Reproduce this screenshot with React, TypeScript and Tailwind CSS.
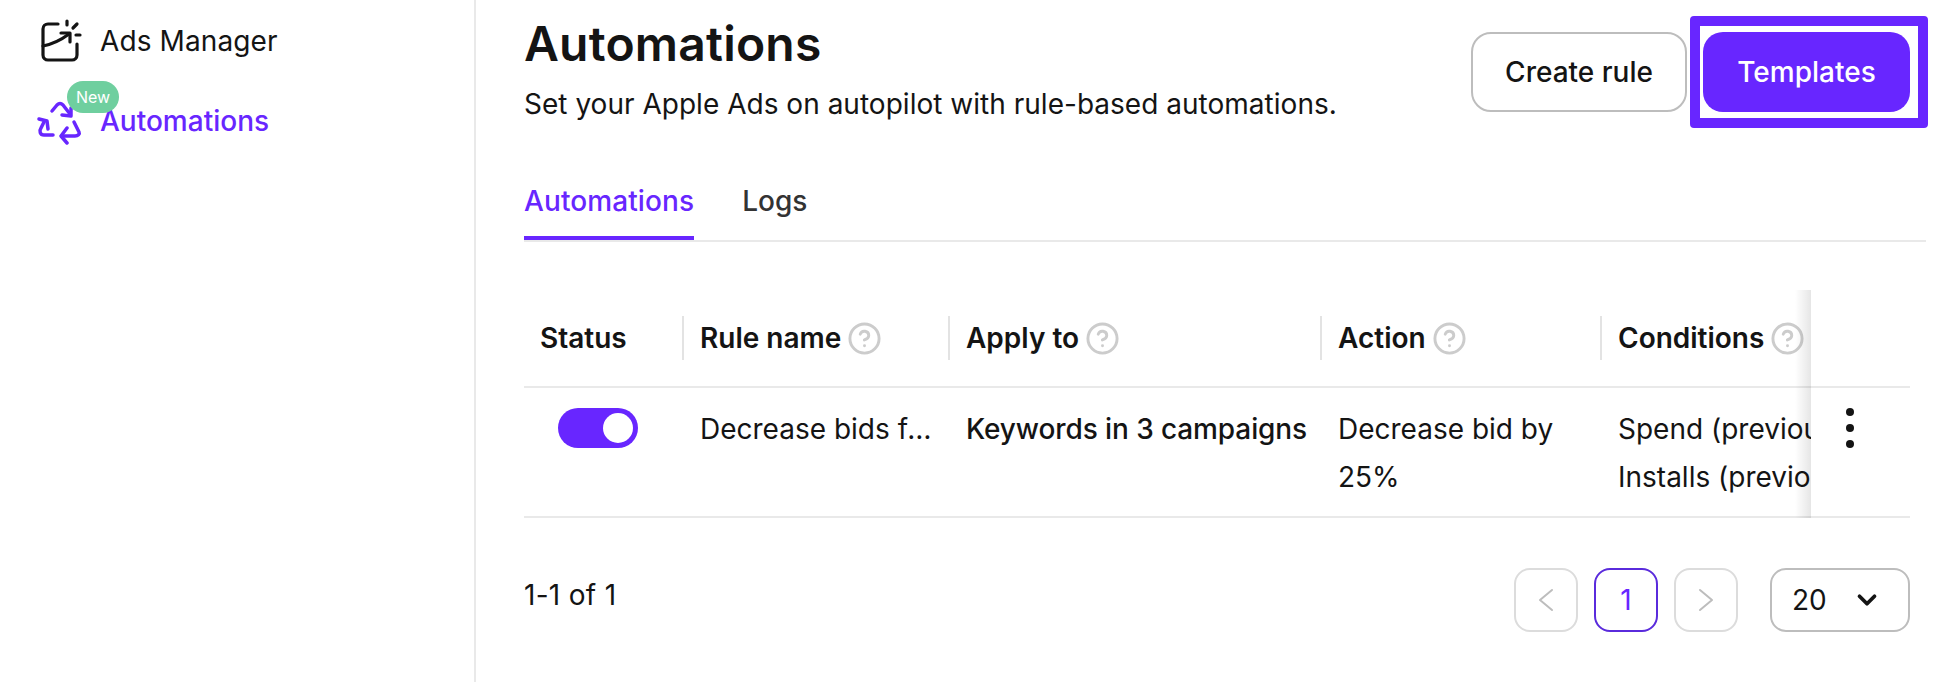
import { ChevronDown, CircleHelp } from 'lucide-react';

const PURPLE = 'text-[#6826ff]';

function AdsIcon() {
    return (
        <svg width="48" height="48" viewBox="0 0 48 48" fill="none" stroke="#141414" strokeWidth="3.2" strokeLinecap="round" strokeLinejoin="round">
            <path d="M22 7H12a5 5 0 0 0-5 5v26a5 5 0 0 0 5 5h24a5 5 0 0 0 5-5V27" />
            <path d="M7 29c10-2 18-6 26-12" />
            <path d="M25 16h9v9" />
            <path d="M31 4v4M37 11l4-4M40 18h4" />
        </svg>
    );
}

function AutomationIcon() {
    return (
        <svg width="48" height="48" viewBox="0 0 48 48" fill="none" stroke="#6826ff" strokeWidth="3.5" strokeLinecap="round" strokeLinejoin="round">
            <path d="M16 14l5-6c2-2 4-2 6 0l7 9" />
            <path d="M26 18l9 1 0-8" />
            <path d="M17 38H8c-4 0-5-4-3-7l3-6" />
            <path d="M3 22l8 2 1 8" />
            <path d="M38 25l5 10c1 2-1 4-4 4H26" />
            <path d="M31 31l-6 8 6 7" />
        </svg>
    );
}

function Chevron({ d }: { d: string }) {
    return (
        <svg width="16" height="24" viewBox="0 0 16 24" fill="none" stroke="#bdbdbd" strokeWidth="2" strokeLinecap="round" strokeLinejoin="round">
            <path d={d} />
        </svg>
    );
}

function HeaderCell({ label, help = true, last = false }: { label: string; help?: boolean; last?: boolean }) {
    return (
        <div className="flex h-[96px] items-center overflow-hidden">
            <div className={`flex h-[44px] w-full items-center gap-[6px] px-4 ${last ? '' : 'border-r-2 border-[#e3e3e3]'}`}>
                <span className="whitespace-nowrap font-semibold text-[#141414]">{label}</span>
                {help && <CircleHelp size={35} strokeWidth={2} className="shrink-0 text-[#cccccc]" />}
            </div>
        </div>
    );
}

export default function App() {
    return (
        <div className="flex h-[682px] w-[1952px] overflow-hidden bg-white text-[28px] leading-[48px] text-[#141414] antialiased [font-family:Inter,sans-serif]">
            {/* Sidebar */}
            <aside className="flex w-[476px] shrink-0 flex-col gap-[32px] border-r-2 border-[#e9e9e9] pl-[36px] pt-[17px]">
                <div className="flex h-[48px] items-center gap-[16px]">
                    <AdsIcon />
                    <span className="tracking-[0.1px] text-[#141414]">Ads Manager</span>
                </div>
                <div className="relative flex h-[48px] items-center gap-[16px]">
                    <AutomationIcon />
                    <span className={`font-medium ${PURPLE}`}>Automations</span>
                    <span className="absolute left-[31px] top-[-16px] rounded-[16px] bg-[#6fcf9f] px-[9px] text-[16px] leading-[32px] text-white">New</span>
                </div>
            </aside>

            {/* Main */}
            <main className="flex min-w-0 flex-1 flex-col pl-[48px] pr-[42px]">
                <div className="flex h-[132px] items-start justify-between">
                    <div>
                        <h1 className="mt-[14px] text-[48px] font-semibold leading-[60px] tracking-[0.2px]">Automations</h1>
                        <p className="mt-[12px] leading-[36px] tracking-[0.02px]">Set your Apple Ads on autopilot with rule-based automations.</p>
                    </div>
                    <div className="mr-[-18px] mt-[16px] flex items-center gap-[3px]">
                        <button className="h-[80px] w-[216px] rounded-[20px] border-2 border-[#bdbdbd] bg-white font-medium">Create rule</button>
                        <div className="rounded-[4px] border-[10px] border-[#6826ff] py-[6px] pl-[3px] pr-[8px]">
                            <button className="block h-[80px] w-[207px] rounded-[20px] bg-[#6826ff] font-medium text-white">Templates</button>
                        </div>
                    </div>
                </div>

                {/* Tabs */}
                <div className="mr-[-16px] flex h-[110px] items-end gap-[48px] border-b-2 border-[#e9e9e9]">
                    <div className={`h-[68px] border-b-4 border-[#6826ff] font-medium leading-[58px] tracking-[0.1px] ${PURPLE}`}>Automations</div>
                    <div className="h-[68px] font-medium leading-[58px] text-[#333333]">Logs</div>
                </div>

                {/* Table */}
                <div className="mt-[48px] flex">
                    <div className="min-w-0 flex-1 overflow-hidden">
                        <div className="grid grid-cols-[160px_266px_372px_280px_210px] border-b-2 border-[#e9e9e9]">
                            <HeaderCell label="Status" help={false} />
                            <HeaderCell label="Rule name" />
                            <HeaderCell label="Apply to" />
                            <HeaderCell label="Action" />
                            <HeaderCell label="Conditions" last />
                        </div>
                        <div className="grid h-[130px] grid-cols-[160px_266px_372px_280px_210px] border-b-2 border-[#e9e9e9]">
                            <div className="pl-[34px] pt-[20px]">
                                <div className="flex h-[40px] w-[80px] items-center justify-end rounded-full bg-[#6826ff] pr-[5px]">
                                    <div className="h-[30px] w-[30px] rounded-full bg-white" />
                                </div>
                            </div>
                            <div className="truncate pl-4 pr-[18px] pt-[17px]">Decrease bids for low performers</div>
                            <div className="whitespace-nowrap px-4 pt-[17px] font-medium tracking-[-0.1px]">Keywords in 3 campaigns</div>
                            <div className="px-4 pt-[17px]">Decrease bid by 25%</div>
                            <div className="overflow-hidden whitespace-nowrap pl-4 pt-[17px]">
                                <div>Spend (previous 7 days)</div>
                                <div>Installs (previous 7 days)</div>
                            </div>
                        </div>
                    </div>
                    <div className="relative w-[99px] shrink-0 bg-white">
                        <div className="absolute right-full top-0 h-full w-[16px] bg-gradient-to-l from-black/10 to-transparent" />
                        <div className="h-[98px] border-b-2 border-[#e9e9e9]" />
                        <div className="flex h-[130px] flex-col items-center gap-[8px] border-b-2 border-[#e9e9e9] pr-[21px] pt-[20px]">
                            <span className="h-[8px] w-[8px] rounded-full bg-[#141414]" />
                            <span className="h-[8px] w-[8px] rounded-full bg-[#141414]" />
                            <span className="h-[8px] w-[8px] rounded-full bg-[#141414]" />
                        </div>
                    </div>
                </div>

                {/* Pagination */}
                <div className="mt-[50px] flex items-start justify-between">
                    <span className="leading-[54px] tracking-[0.3px]">1-1 of 1</span>
                    <div className="flex items-center gap-4">
                        <div className="flex h-[64px] w-[64px] items-center justify-center rounded-[16px] border-2 border-[#dcdcdc]">
                            <Chevron d="M14 2 2 12l12 10" />
                        </div>
                        <div className={`flex h-[64px] w-[64px] items-center justify-center rounded-[16px] border-2 border-[#5a2bdc] ${PURPLE}`}>1</div>
                        <div className="flex h-[64px] w-[64px] items-center justify-center rounded-[16px] border-2 border-[#dcdcdc]">
                            <Chevron d="M2 2l12 10L2 22" />
                        </div>
                        <div className="ml-4 flex h-[64px] w-[140px] items-center justify-between rounded-[16px] border-2 border-[#bdbdbd] pl-[20px] pr-[26px]">
                            <span>20</span>
                            <ChevronDown size={30} strokeWidth={3} />
                        </div>
                    </div>
                </div>
            </main>
        </div>
    );
}
